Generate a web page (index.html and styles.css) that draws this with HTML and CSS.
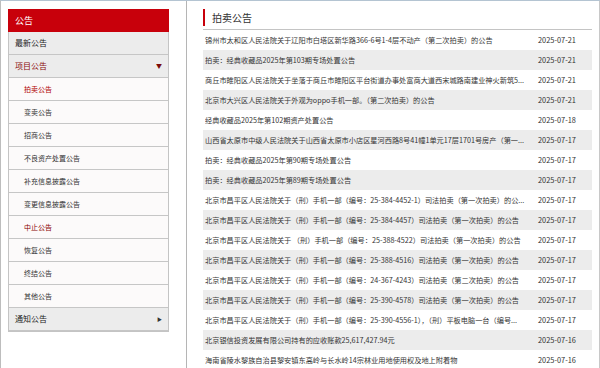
FILE: index.html
```html
<!DOCTYPE html>
<html lang="zh-CN">
<head>
    <meta charset="UTF-8">
    <title>拍卖公告</title>
    <link rel="stylesheet" href="styles.css">
</head>
<body>
    <div class="page">
        <div class="side">
            <div class="menu">
                <div class="menu-head">公告</div>
                <div class="menu-item">最新公告</div>
                <div class="menu-item open">项目公告<span class="arrow down">▼</span></div>
                <div class="sub-item current">拍卖公告</div>
                <div class="sub-item">变卖公告</div>
                <div class="sub-item">招商公告</div>
                <div class="sub-item">不良资产处置公告</div>
                <div class="sub-item">补充信息披露公告</div>
                <div class="sub-item">变更信息披露公告</div>
                <div class="sub-item visited">中止公告</div>
                <div class="sub-item">恢复公告</div>
                <div class="sub-item">终结公告</div>
                <div class="sub-item">其他公告</div>
                <div class="menu-item">通知公告<span class="arrow right">▶</span></div>
            </div>
        </div>
        <div class="main">
            <div class="title-bar"><span class="title">拍卖公告</span></div>
            <ul class="list">
                <li><span class="name">锦州市太和区人民法院关于辽阳市白塔区新华路366-6号1-4层不动产（第二次拍卖）的公告</span><span class="date">2025-07-21</span></li>
                <li><span class="name">拍卖：经典收藏品2025年第103期专场处置公告</span><span class="date">2025-07-21</span></li>
                <li><span class="name">商丘市睢阳区人民法院关于坐落于商丘市睢阳区平台街道办事处富商大道西宋城路南建业神火新筑5...</span><span class="date">2025-07-21</span></li>
                <li><span class="name">北京市大兴区人民法院关于外观为oppo手机一部。（第二次拍卖）的公告</span><span class="date">2025-07-21</span></li>
                <li><span class="name">经典收藏品2025年第102期资产处置公告</span><span class="date">2025-07-18</span></li>
                <li><span class="name">山西省太原市中级人民法院关于山西省太原市小店区星河西路8号41幢1单元17层1701号房产（第一...</span><span class="date">2025-07-17</span></li>
                <li><span class="name">拍卖：经典收藏品2025年第90期专场处置公告</span><span class="date">2025-07-17</span></li>
                <li><span class="name">拍卖：经典收藏品2025年第89期专场处置公告</span><span class="date">2025-07-17</span></li>
                <li><span class="name">北京市昌平区人民法院关于（刑）手机一部（编号：25-384-4452-1）司法拍卖（第一次拍卖）的公...</span><span class="date">2025-07-17</span></li>
                <li><span class="name">北京市昌平区人民法院关于（刑）手机一部（编号：25-384-4457）司法拍卖（第一次拍卖）的公告</span><span class="date">2025-07-17</span></li>
                <li><span class="name">北京市昌平区人民法院关于 （刑）手机一部（编号：25-388-4522）司法拍卖（第一次拍卖）的公告</span><span class="date">2025-07-17</span></li>
                <li><span class="name">北京市昌平区人民法院关于（刑）手机一部（编号：25-388-4516）司法拍卖（第一次拍卖）的公告</span><span class="date">2025-07-17</span></li>
                <li><span class="name">北京市昌平区人民法院关于（刑）手机一部（编号：24-367-4243）司法拍卖（第二次拍卖）的公告</span><span class="date">2025-07-17</span></li>
                <li><span class="name">北京市昌平区人民法院关于（刑）手机一部（编号：25-390-4578）司法拍卖（第一次拍卖）的公告</span><span class="date">2025-07-17</span></li>
                <li><span class="name">北京市昌平区人民法院关于（刑）手机一部（编号：25-390-4556-1），（刑）平板电脑一台（编号...</span><span class="date">2025-07-17</span></li>
                <li><span class="name">北京银信投资发展有限公司持有的应收账款25,617,427.94元</span><span class="date">2025-07-16</span></li>
                <li><span class="name">海南省陵水黎族自治县黎安镇东高岭与长水岭14宗林业用地使用权及地上附着物</span><span class="date">2025-07-16</span></li>
            </ul>
        </div>
    </div>
</body>
</html>
```

FILE: styles.css
```css
body {
    margin: 0;
    background-color: #fff;
    color: #333;
    font-family: "Noto Sans CJK SC", "Noto Sans", sans-serif;
    overflow: hidden;
}

.page {
    display: flex;
    height: 368px;
    border-top: 1px solid #b4c4d2;
    border-left: 1px solid #bdbdbd;
    box-sizing: border-box;
}

/* 左侧菜单 */
.side {
    width: 186px;
    flex-shrink: 0;
    padding: 8px 0 0 7px;
    border-right: 1px solid #b5b5b5;
    box-sizing: border-box;
}

.menu {
    width: 161px;
    border: 1px solid #c4c4c4;
    border-top: none;
    box-sizing: border-box;
}

.menu-head {
    height: 23px;
    line-height: 23px;
    margin: 0 -1px;
    padding-left: 7px;
    background-color: #c8000b;
    color: #fff;
    font-size: 9px;
}

.menu-item {
    position: relative;
    height: 23px;
    line-height: 22px;
    padding-left: 6px;
    background-color: #ececec;
    border-bottom: 1px solid #c6c6c6;
    box-sizing: border-box;
    font-size: 8px;
    color: #222;
}

.menu-item.open {
    color: #8a0a0a;
}

.arrow {
    position: absolute;
    right: 6px;
    top: 0;
    font-size: 6px;
}

.arrow.down {
    color: #7a0a0a;
}

.arrow.right {
    color: #333;
    font-size: 5px;
}

.sub-item {
    height: 23px;
    line-height: 22px;
    padding-left: 15px;
    background-color: #fcfafa;
    border-bottom: 1px solid #c6c6c6;
    box-sizing: border-box;
    font-size: 7px;
    color: #333;
}

.sub-item.current {
    color: #b00000;
}

.sub-item.visited {
    color: #8a0000;
}

/* 右侧列表 */
.main {
    flex: 1;
    min-width: 0;
    padding: 8px 7px 0 16px;
    border-right: 1px solid #c8c8c8;
}

.title-bar {
    height: 20px;
    border-bottom: 1px solid #c4c4c4;
}

.title {
    display: block;
    height: 17px;
    line-height: 17px;
    padding-left: 7px;
    border-left: 2px solid #c8000b;
    font-size: 10px;
    color: #333;
}

.list {
    margin: 0;
    padding: 0;
    list-style: none;
}

.list li {
    display: flex;
    height: 20px;
    line-height: 20px;
    padding-left: 2px;
    font-size: 7.2px;
    color: #333;
}

.list li:nth-child(even) {
    background-color: #ececec;
}

.name {
    flex: 1;
    min-width: 0;
    padding-right: 8px;
    white-space: nowrap;
    overflow: hidden;
}

.date {
    width: 54px;
    flex-shrink: 0;
    font-size: 7.4px;
}
```
